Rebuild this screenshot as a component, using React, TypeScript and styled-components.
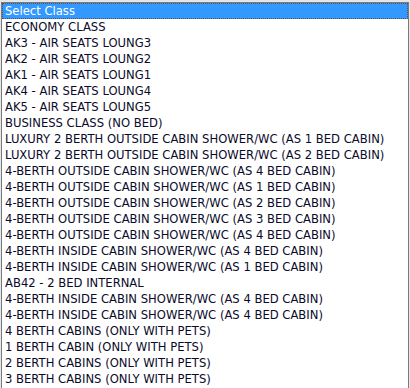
import React from 'react'
import styled, { createGlobalStyle } from 'styled-components'

const GlobalStyle = createGlobalStyle`
  html, body {
    margin: 0;
    padding: 0;
    background: #ffffff;
  }
`

const Page = styled.div`
  width: 410px;
  height: 388px;
  padding: 2px 1px 0 1px;
  box-sizing: border-box;
  background: #e6e6e6;
`

const ListBox = styled.ul`
  list-style: none;
  margin: 0;
  padding: 0 0 1px 0;
  width: 408px;
  box-sizing: border-box;
  border: 1px solid #7a7a7a;
  background: #ffffff;
  font-family: 'DejaVu Sans', Verdana, sans-serif;
  font-size: 11.6px;
  color: #0a0a2a;
`

const Option = styled.li<{ $selected?: boolean }>`
  height: 16px;
  line-height: 16px;
  padding-left: 3px;
  white-space: nowrap;
  overflow: hidden;
  box-sizing: border-box;
  background: ${p => (p.$selected ? '#3399ff' : 'transparent')};
  color: ${p => (p.$selected ? '#ffffff' : 'inherit')};
  outline: ${p => (p.$selected ? '1px dotted #555' : 'none')};
  outline-offset: -1px;
`

const options = [
  'Select Class',
  'ECONOMY CLASS',
  'AK3 - AIR SEATS LOUNG3',
  'AK2 - AIR SEATS LOUNG2',
  'AK1 - AIR SEATS LOUNG1',
  'AK4 - AIR SEATS LOUNG4',
  'AK5 - AIR SEATS LOUNG5',
  'BUSINESS CLASS (NO BED)',
  'LUXURY 2 BERTH OUTSIDE CABIN SHOWER/WC (AS 1 BED CABIN)',
  'LUXURY 2 BERTH OUTSIDE CABIN SHOWER/WC (AS 2 BED CABIN)',
  '4-BERTH OUTSIDE CABIN SHOWER/WC (AS 4 BED CABIN)',
  '4-BERTH OUTSIDE CABIN SHOWER/WC (AS 1 BED CABIN)',
  '4-BERTH OUTSIDE CABIN SHOWER/WC (AS 2 BED CABIN)',
  '4-BERTH OUTSIDE CABIN SHOWER/WC (AS 3 BED CABIN)',
  '4-BERTH OUTSIDE CABIN SHOWER/WC (AS 4 BED CABIN)',
  '4-BERTH INSIDE CABIN SHOWER/WC (AS 4 BED CABIN)',
  '4-BERTH INSIDE CABIN SHOWER/WC (AS 1 BED CABIN)',
  'AB42 - 2 BED INTERNAL',
  '4-BERTH INSIDE CABIN SHOWER/WC (AS 4 BED CABIN)',
  '4-BERTH INSIDE CABIN SHOWER/WC (AS 4 BED CABIN)',
  '4 BERTH CABINS (ONLY WITH PETS)',
  '1 BERTH CABIN (ONLY WITH PETS)',
  '2 BERTH CABINS (ONLY WITH PETS)',
  '3 BERTH CABINS (ONLY WITH PETS)',
]

const App = () => {
  return (
    <Page>
      <GlobalStyle />
      <ListBox>
        {options.map((o, i) => (
          <Option key={i} $selected={i === 0}>
            {o}
          </Option>
        ))}
      </ListBox>
    </Page>
  )
}

export default App
